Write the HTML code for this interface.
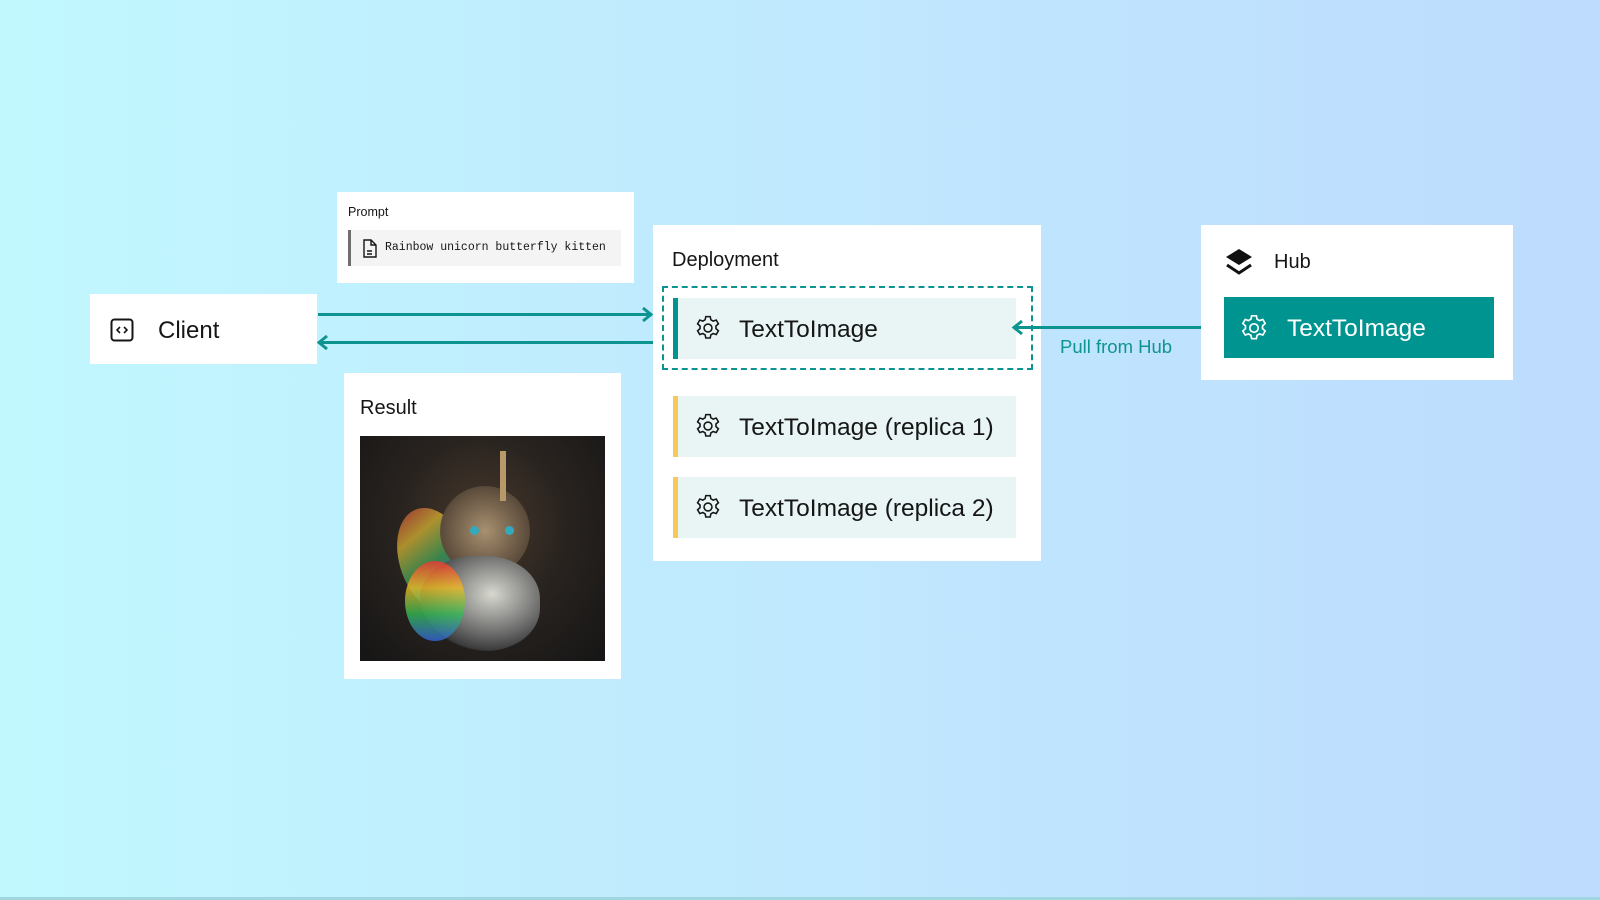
<!DOCTYPE html>
<html><head><meta charset="utf-8"><style>
*{margin:0;padding:0;box-sizing:border-box}
body{width:1600px;height:900px;overflow:hidden;position:relative;font-family:"Liberation Sans",sans-serif;color:#161616;
background:linear-gradient(90deg,#c1f8fe 0%,#c0ebfe 40%,#bedcfe 100%)}
.box{position:absolute;background:#fff}
.abs{position:absolute}
.item{position:absolute;left:673px;width:343px;height:61px;background:#e9f5f5;border-left:5px solid #009490}
.item.y{border-left-color:#f7c85a}
.item svg{position:absolute;left:16px;top:16px}
.item span{position:absolute;left:61px;top:18px;font-size:24.5px}
.line{position:absolute;height:3px;background:#0e9490}
</style></head><body>
<div class="abs" style="left:0;top:897px;width:1600px;height:3px;background:#9fd6e0"></div>

<div class="box" style="left:337px;top:192px;width:297px;height:91px">
 <div class="abs" style="left:11px;top:13px;font-size:12.5px">Prompt</div>
 <div class="abs" style="left:11px;top:38px;width:273px;height:36px;background:#f4f4f4;border-left:3px solid #6f6f6f">
  <svg class="abs" style="left:11px;top:9px" width="16" height="19" viewBox="0 0 16 19" fill="none" stroke="#161616" stroke-width="1.4"><path d="M2 1h7l5 5v12H2z M9 1v5h5 M5 12h5 M5 15h5"/></svg>
  <div class="abs" style="left:34px;top:11px;font-family:'Liberation Mono',monospace;font-size:11.5px">Rainbow unicorn butterfly kitten</div>
 </div>
</div>

<div class="box" style="left:90px;top:294px;width:227px;height:70px">
 <svg class="abs" style="left:20px;top:24px" width="24" height="24" viewBox="0 0 24 24" fill="none" stroke="#161616" stroke-width="2"><rect x="1.5" y="1.5" width="21" height="21" rx="3"/><path d="M10 9l-3 3 3 3M14 9l3 3-3 3" stroke-width="1.6"/></svg>
 <div class="abs" style="left:68px;top:23px;font-size:24px">Client</div>
</div>

<div class="line" style="left:318px;top:313px;width:332px"></div>
<svg class="abs" style="left:640px;top:306px" width="14" height="17" fill="none" stroke="#0e9490" stroke-width="3"><path d="M3 2l8 6.5-8 6.5"/></svg>
<div class="line" style="left:320px;top:341px;width:333px"></div>
<svg class="abs" style="left:316px;top:334px" width="14" height="17" fill="none" stroke="#0e9490" stroke-width="3"><path d="M11 2l-8 6.5 8 6.5"/></svg>

<div class="box" style="left:344px;top:373px;width:277px;height:306px">
 <div class="abs" style="left:16px;top:24px;font-size:20px">Result</div>
 <div class="abs" style="left:16px;top:63px;width:245px;height:225px;overflow:hidden;background:radial-gradient(ellipse at 50% 40%,#4a3a2c 0%,#2a2420 45%,#151515 100%)">
  <div class="abs" style="left:40px;top:70px;width:70px;height:110px;border-radius:50%;background:linear-gradient(160deg,#c23a3a,#d7b232,#3aa25a,#3a6ad0,#8a3ac0);opacity:.75;transform:rotate(-20deg)"></div>
  <div class="abs" style="left:80px;top:50px;width:90px;height:90px;border-radius:50%;background:radial-gradient(#a89070,#5a4a3a 70%,transparent 72%)"></div>
  <div class="abs" style="left:60px;top:120px;width:120px;height:95px;border-radius:45%;background:radial-gradient(ellipse at 60% 40%,#d8d8d0,#6a6a6a 50%,#3a3a3a 70%,transparent 72%)"></div>
  <div class="abs" style="left:45px;top:125px;width:60px;height:80px;border-radius:50%;background:linear-gradient(180deg,#e33,#eb2,#3b5,#36d);opacity:.8"></div>
  <div class="abs" style="left:140px;top:15px;width:6px;height:50px;background:#b89a6a"></div>
  <div class="abs" style="left:110px;top:90px;width:9px;height:9px;border-radius:50%;background:#3ab"></div>
  <div class="abs" style="left:145px;top:90px;width:9px;height:9px;border-radius:50%;background:#3ab"></div>
 </div>
</div>

<div class="box" style="left:653px;top:225px;width:388px;height:336px"></div>
<div class="abs" style="left:672px;top:249px;font-size:20px">Deployment</div>
<div class="abs" style="left:662px;top:286px;width:371px;height:84px;border:2px dashed #0e9490"></div>
<div class="item" style="top:298px"><svg width="28" height="28" viewBox="0 0 32 32" fill="none" stroke="#161616" stroke-width="1.8"><circle cx="16" cy="16" r="4.5"/><path d="M13.5 3h5l.8 3.6 2.6 1.5 3.5-1.2 2.5 4.3-2.8 2.5v3l2.8 2.5-2.5 4.3-3.5-1.2-2.6 1.5-.8 3.6h-5l-.8-3.6-2.6-1.5-3.5 1.2-2.5-4.3 2.8-2.5v-3L4.1 11.2l2.5-4.3 3.5 1.2 2.6-1.5z"/></svg><span>TextToImage</span></div>
<div class="item y" style="top:396px"><svg width="28" height="28" viewBox="0 0 32 32" fill="none" stroke="#161616" stroke-width="1.8"><circle cx="16" cy="16" r="4.5"/><path d="M13.5 3h5l.8 3.6 2.6 1.5 3.5-1.2 2.5 4.3-2.8 2.5v3l2.8 2.5-2.5 4.3-3.5-1.2-2.6 1.5-.8 3.6h-5l-.8-3.6-2.6-1.5-3.5 1.2-2.5-4.3 2.8-2.5v-3L4.1 11.2l2.5-4.3 3.5 1.2 2.6-1.5z"/></svg><span>TextToImage (replica 1)</span></div>
<div class="item y" style="top:477px"><svg width="28" height="28" viewBox="0 0 32 32" fill="none" stroke="#161616" stroke-width="1.8"><circle cx="16" cy="16" r="4.5"/><path d="M13.5 3h5l.8 3.6 2.6 1.5 3.5-1.2 2.5 4.3-2.8 2.5v3l2.8 2.5-2.5 4.3-3.5-1.2-2.6 1.5-.8 3.6h-5l-.8-3.6-2.6-1.5-3.5 1.2-2.5-4.3 2.8-2.5v-3L4.1 11.2l2.5-4.3 3.5 1.2 2.6-1.5z"/></svg><span>TextToImage (replica 2)</span></div>

<div class="line" style="left:1016px;top:326px;width:210px"></div>
<svg class="abs" style="left:1011px;top:319px" width="14" height="17" fill="none" stroke="#0e9490" stroke-width="3"><path d="M11 2l-8 6.5 8 6.5"/></svg>
<div class="abs" style="left:1060px;top:336px;font-size:18.5px;color:#0e9490">Pull from Hub</div>

<div class="box" style="left:1201px;top:225px;width:312px;height:155px">
 <svg class="abs" style="left:23px;top:22px" width="30" height="32" viewBox="0 0 30 32"><path d="M15 2l13 8-13 8-13-8z" fill="#111"/><path d="M3 18l12 8 12-8" fill="none" stroke="#111" stroke-width="3"/></svg>
 <div class="abs" style="left:73px;top:26px;font-size:20px">Hub</div>
 <div class="abs" style="left:23px;top:72px;width:270px;height:61px;background:#009490">
  <svg class="abs" style="left:15px;top:16px" width="30" height="30" viewBox="0 0 32 32" fill="none" stroke="#fff" stroke-width="1.8"><circle cx="16" cy="16" r="4.5"/><path d="M13.5 3h5l.8 3.6 2.6 1.5 3.5-1.2 2.5 4.3-2.8 2.5v3l2.8 2.5-2.5 4.3-3.5-1.2-2.6 1.5-.8 3.6h-5l-.8-3.6-2.6-1.5-3.5 1.2-2.5-4.3 2.8-2.5v-3L4.1 11.2l2.5-4.3 3.5 1.2 2.6-1.5z"/></svg>
  <div class="abs" style="left:63px;top:18px;font-size:24.5px;color:#fff">TextToImage</div>
 </div>
</div>
</body></html>
